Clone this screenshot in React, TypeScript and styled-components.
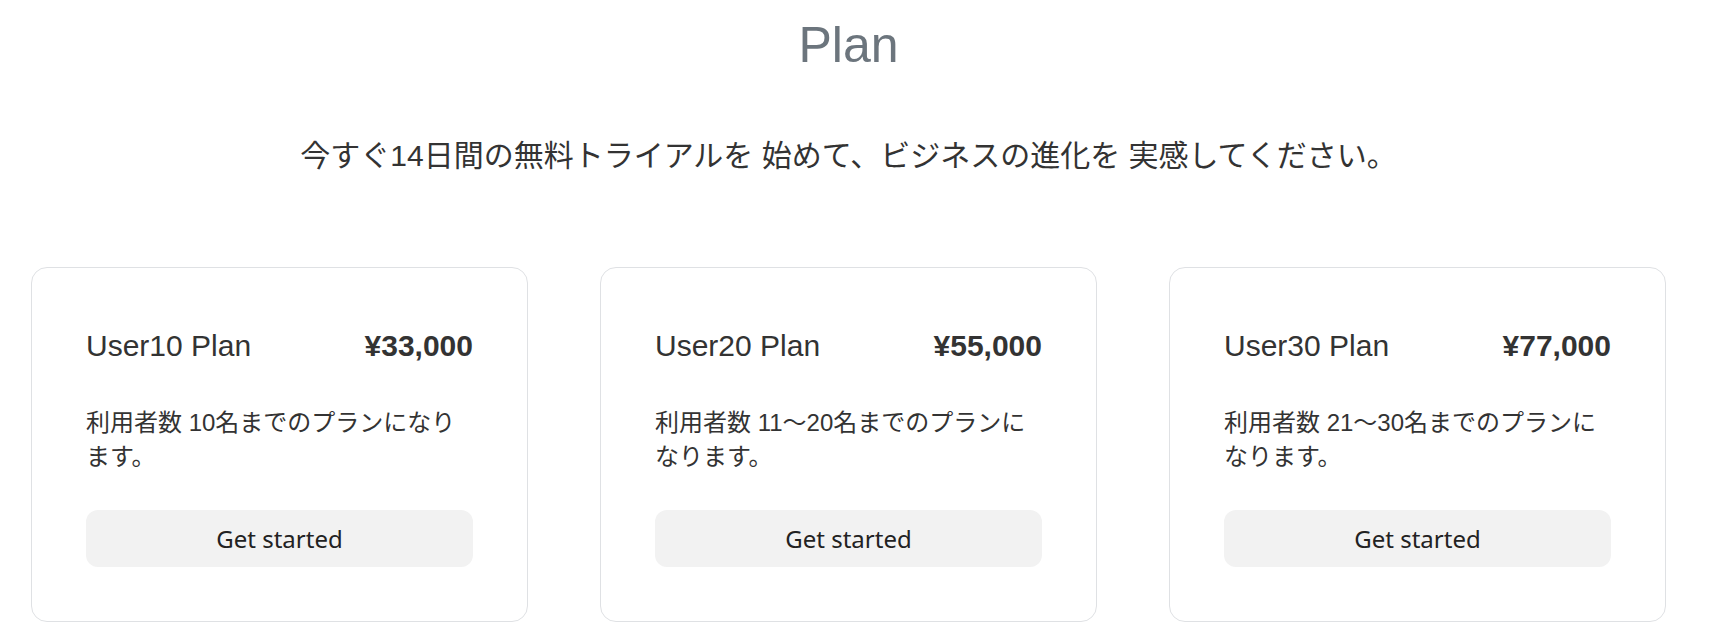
import React from 'react'
import styled, { createGlobalStyle } from 'styled-components'

const GlobalStyle = createGlobalStyle`
  * {
    box-sizing: border-box;
  }
  body {
    margin: 0;
    background: #ffffff;
    color: #333333;
    font-family: "Liberation Sans", "Noto Sans CJK JP", sans-serif;
  }
`

const Page = styled.main`
  width: 1697px;
  padding: 15px 31px 0;
`

const Title = styled.h1`
  margin: 0;
  font-size: 50px;
  font-weight: 400;
  line-height: 1.2;
  color: #6c757d;
  text-align: center;
`

const Lead = styled.p`
  margin: 58px 0 0;
  font-size: 30px;
  line-height: 1.5;
  text-align: center;
  color: #333333;
`

const Grid = styled.section`
  display: grid;
  grid-template-columns: repeat(3, 1fr);
  gap: 72px;
  margin-top: 89px;
`

const Card = styled.div`
  border: 1px solid #dfe1e4;
  border-radius: 16px;
  padding: 60px 54px 54px;
  background: #fff;
`

const CardHead = styled.div`
  display: flex;
  justify-content: space-between;
  align-items: baseline;
  font-size: 30px;
  line-height: 1.2;
`

const PlanName = styled.div`
  font-weight: 400;
`

const Price = styled.div`
  font-weight: 700;
`

const Description = styled.p`
  margin: 42px 0 0;
  font-size: 24px;
  line-height: 1.4;
`

const StartButton = styled.button`
  display: block;
  width: 100%;
  height: 57px;
  margin-top: 37px;
  border: none;
  border-radius: 12px;
  background: #f2f2f2;
  color: #222222;
  font-family: "Noto Sans", "Liberation Sans", sans-serif;
  font-size: 24px;
  cursor: pointer;
`

type Plan = {
  name: string
  price: string
  description: string
}

const plans: Plan[] = [
  { name: 'User10 Plan', price: '¥33,000', description: '利用者数 10名までのプランになります。' },
  { name: 'User20 Plan', price: '¥55,000', description: '利用者数 11〜20名までのプランになります。' },
  { name: 'User30 Plan', price: '¥77,000', description: '利用者数 21〜30名までのプランになります。' },
]

const PlanCard = ({ plan }: { plan: Plan }) => (
  <Card>
    <CardHead>
      <PlanName>{plan.name}</PlanName>
      <Price>{plan.price}</Price>
    </CardHead>
    <Description>{plan.description}</Description>
    <StartButton>Get started</StartButton>
  </Card>
)

export default function App() {
  return (
    <>
      <GlobalStyle />
      <Page>
        <Title>Plan</Title>
        <Lead>今すぐ14日間の無料トライアルを 始めて、ビジネスの進化を 実感してください。</Lead>
        <Grid>
          {plans.map(plan => <PlanCard key={plan.name} plan={plan} />)}
        </Grid>
      </Page>
    </>
  )
}
